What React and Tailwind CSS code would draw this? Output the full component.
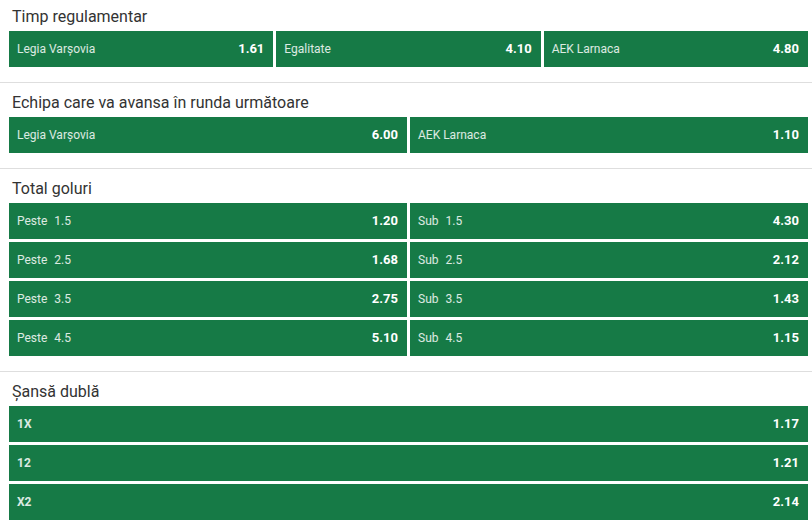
const sections = [
    {
        title: 'Timp regulamentar',
        cols: 3,
        items: [
            { label: 'Legia Varșovia', odd: '1.61' },
            { label: 'Egalitate', odd: '4.10' },
            { label: 'AEK Larnaca', odd: '4.80' },
        ],
    },
    {
        title: 'Echipa care va avansa în runda următoare',
        cols: 2,
        items: [
            { label: 'Legia Varșovia', odd: '6.00' },
            { label: 'AEK Larnaca', odd: '1.10' },
        ],
    },
    {
        title: 'Total goluri',
        cols: 2,
        items: [
            { label: 'Peste', line: '1.5', odd: '1.20' },
            { label: 'Sub', line: '1.5', odd: '4.30' },
            { label: 'Peste', line: '2.5', odd: '1.68' },
            { label: 'Sub', line: '2.5', odd: '2.12' },
            { label: 'Peste', line: '3.5', odd: '2.75' },
            { label: 'Sub', line: '3.5', odd: '1.43' },
            { label: 'Peste', line: '4.5', odd: '5.10' },
            { label: 'Sub', line: '4.5', odd: '1.15' },
        ],
    },
    {
        title: 'Șansă dublă',
        cols: 1,
        bold: true,
        items: [
            { label: '1X', odd: '1.17' },
            { label: '12', odd: '1.21' },
            { label: 'X2', odd: '2.14' },
        ],
    },
];

const gridCols = {
    1: 'grid-cols-1',
    2: 'grid-cols-2',
    3: 'grid-cols-3',
};

function OddButton({ item, bold }) {
    return (
        <button className="flex h-9 items-center justify-between bg-[#167a46] pl-2 pr-[9px] text-left">
            <span className={`text-[12px] text-white/85 ${bold ? 'font-bold' : ''}`}>
                {item.label}
                {item.line && <span className="ml-[7px]">{item.line}</span>}
            </span>
            <span className="text-[13px] font-bold text-white">{item.odd}</span>
        </button>
    );
}

export default function App() {
    return (
        <div className="w-[812px] bg-white font-['Roboto',sans-serif]">
            {sections.map((section, i) => (
                <section
                    key={section.title}
                    className={`pb-[15px] pl-[9px] pr-[4px] ${i === 0 ? 'pt-[7px]' : 'border-t border-[#dedede] pt-[10px]'}`}
                >
                    <h2 className="mb-1 pl-[3px] text-[16px] leading-5 text-[#333333]">
                        {section.title}
                    </h2>
                    <div className={`grid gap-[3px] ${gridCols[section.cols]}`}>
                        {section.items.map((item) => (
                            <OddButton
                                key={item.label + (item.line || '')}
                                item={item}
                                bold={section.bold}
                            />
                        ))}
                    </div>
                </section>
            ))}
        </div>
    );
}
